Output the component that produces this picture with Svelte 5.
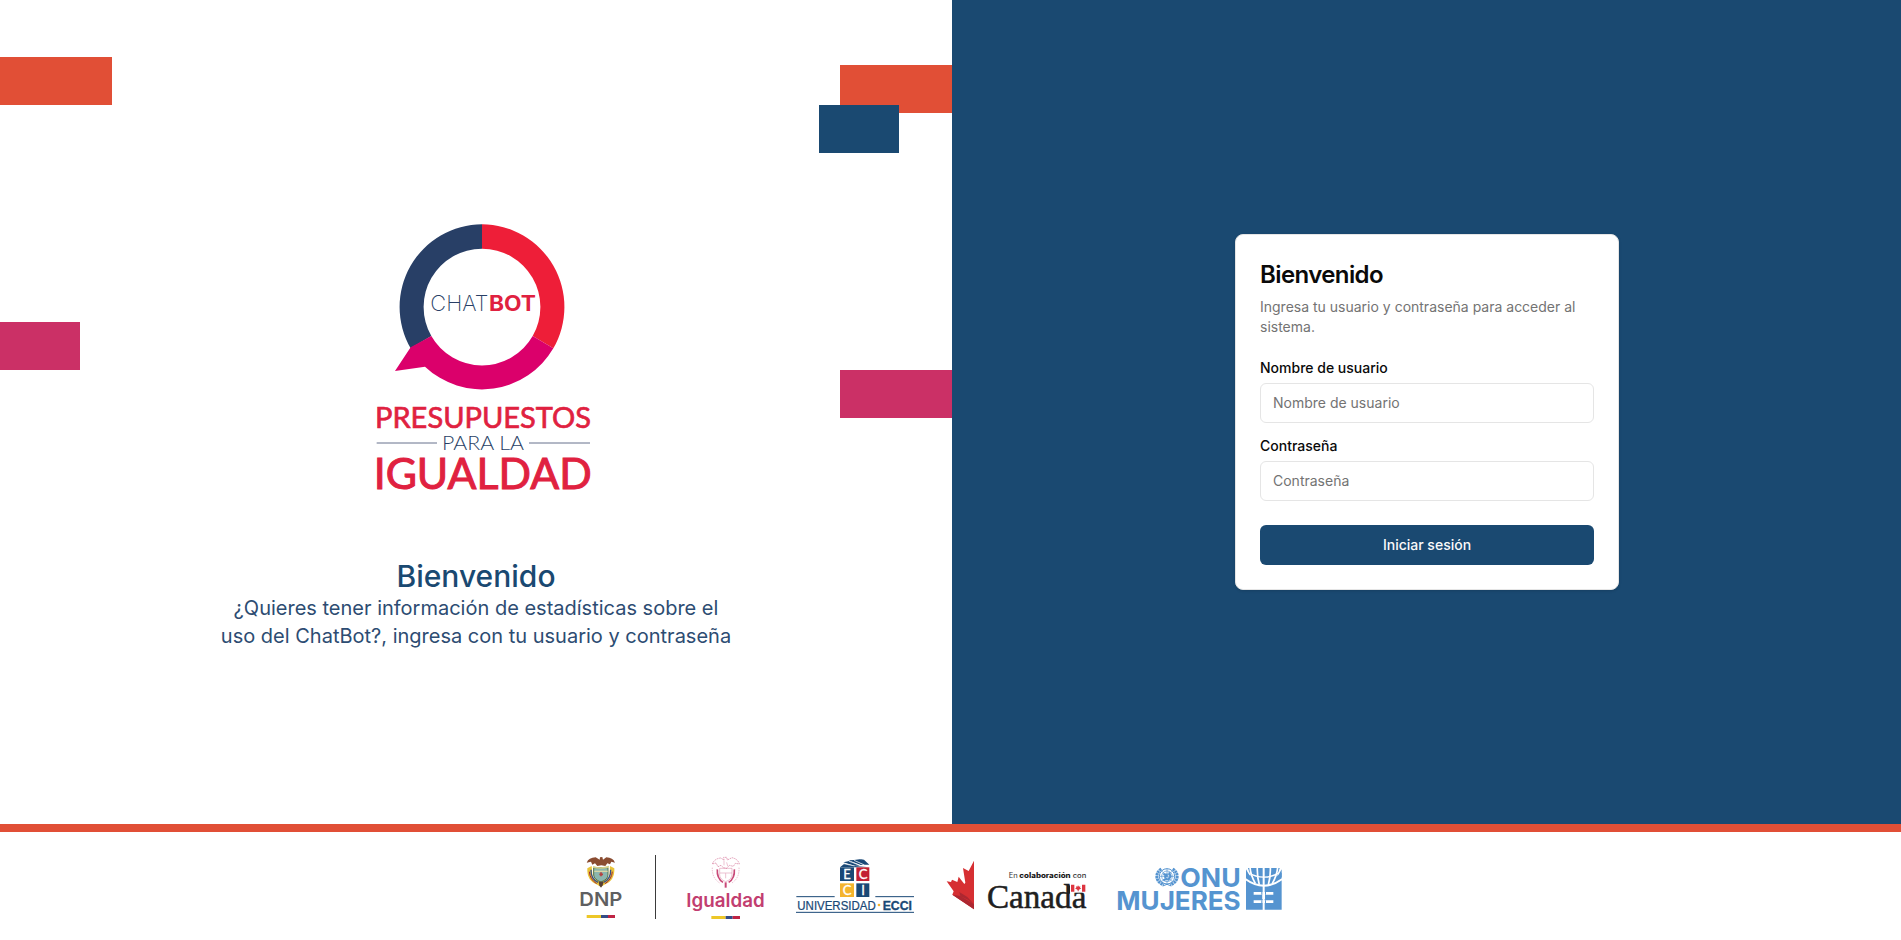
<script lang="ts">
  let user = $state('');
  let password = $state('');
</script>

<div class="page">
  <main>
    <section class="intro">
      <span class="block orange a"></span>
      <span class="block pink b"></span>
      <span class="block orange c"></span>
      <span class="block blue d"></span>
      <span class="block pink e"></span>

      <svg class="brand" viewBox="0 0 750 870" role="img" aria-label="Chatbot Presupuestos para la Igualdad">
        <path fill="#283f66" d="M366 43A248 248 0 0 0 152 415L214 378A175 175 0 0 1 366 116Z" />
        <path fill="#ee1e38" d="M366 43A248 248 0 0 1 580 415L518 378A175 175 0 0 0 366 116Z" />
        <path fill="#db006b" d="M580 415A248 248 0 0 1 195 470L105 483L152 412L214 378A175 175 0 0 0 518 378Z" />
        <text class="inter" x="211" y="304" font-size="63" font-weight="200" fill="#283f66" textLength="174" lengthAdjust="spacingAndGlyphs">CHAT</text>
        <text class="inter" x="387" y="304" font-size="63" font-weight="700" fill="#e02140" textLength="141" lengthAdjust="spacingAndGlyphs">BOT</text>
        <text class="lato heavy" x="45" y="655" font-size="87" textLength="648" lengthAdjust="spacingAndGlyphs">PRESUPUESTOS</text>
        <path stroke="#66708c" stroke-width="3" d="M50 699H231M507 699H690" />
        <text class="lato" x="246" y="719" font-size="60" font-weight="300" fill="#283f66" textLength="246" lengthAdjust="spacingAndGlyphs">PARA LA</text>
        <text class="lato heavy big" x="41" y="836" font-size="127" textLength="654" lengthAdjust="spacingAndGlyphs">IGUALDAD</text>
      </svg>

      <h1>Bienvenido</h1>
      <p>¿Quieres tener información de estadísticas sobre el uso del ChatBot?, ingresa con tu usuario y contraseña</p>
    </section>

    <section class="access">
      <form class="card" onsubmit={(e) => e.preventDefault()}>
        <header>
          <h2>Bienvenido</h2>
          <p>Ingresa tu usuario y contraseña para acceder al sistema.</p>
        </header>
        <div class="field">
          <label for="user">Nombre de usuario</label>
          <input id="user" placeholder="Nombre de usuario" bind:value={user} />
        </div>
        <div class="field">
          <label for="password">Contraseña</label>
          <input id="password" type="password" placeholder="Contraseña" bind:value={password} />
        </div>
        <button type="submit">Iniciar sesión</button>
      </form>
    </section>
  </main>

  <footer>
    <svg width="52" viewBox="45 51 156 324" role="img" aria-label="DNP">
      <path fill="#e9c338" d="M82 160Q80 198 112 209L122 216L133 209Q165 198 163 160L150 153L148 188L122 202L98 188L95 153Z" />
      <path fill="none" stroke="#35508b" stroke-width="4" d="M93 164Q92 191 114 202M152 164Q153 191 131 202" />
      <path fill="none" stroke="#a02c35" stroke-width="3" d="M88 170Q90 194 110 206M157 170Q155 194 135 206" />
      <path fill="#8bb6ae" stroke="#55713f" stroke-width="3" d="M101 158H144V180Q144 193 123 201Q101 193 101 180Z" />
      <path stroke="#d8d6a6" stroke-width="4" d="M103 169H143" />
      <path stroke="#b54240" stroke-width="5" d="M118 178H129M123 172V184" />
      <path fill="#8a4c31" d="M80 143Q86 128 107 127L119 134L120 127L127 126L129 134L139 127Q159 128 165 143L154 140L150 148L142 145L136 153L124 151L112 153L105 145L97 149L93 140Z" />
      <path fill="none" stroke="#d4cf8a" stroke-width="5" d="M99 155Q122 163 147 155" />
      <path fill="#553f37" d="M116 200H131L128 211L123 218L118 211Z" />
      <text class="inter" x="58" y="273" font-size="57" font-weight="600" fill="#5f5f61" textLength="129" lengthAdjust="spacingAndGlyphs">DNP</text>
      <path fill="#edc728" d="M80 300H123V309H80Z" /><path fill="#344c87" d="M123 300H144V309H123Z" /><path fill="#bf2444" d="M144 300H165V309H144Z" />
    </svg>

    <span class="divider"></span>

    <svg width="81" viewBox="375 51 243 324" role="img" aria-label="Igualdad">
      <g fill="none" stroke="#c94978">
        <path stroke-width="2" stroke-dasharray="5 2" opacity=".75" d="M457 147Q463 131 482 129L492 135L491 127L500 127L502 135L516 128Q534 132 538 147L526 145L520 154L508 151L500 160L490 158L483 151L474 155L468 144Z" />
        <path stroke-width="2" stroke-dasharray="4 3" opacity=".55" d="M457 158Q455 190 481 205M537 158Q539 190 514 205" />
        <path stroke-width="5" d="M472 163Q470 190 489 202M523 163Q525 190 506 202" />
        <path stroke-width="2" opacity=".5" d="M479 160H516V179Q516 193 497 200Q479 193 479 179ZM480 174H516M492 136V151M500 142L503 153M497 175V190" />
        <path stroke-width="6" d="M497 202V218" />
      </g>
      <text class="inter" x="379" y="276" font-size="56" font-weight="600" fill="#c23e70" textLength="235" lengthAdjust="spacingAndGlyphs">Igualdad</text>
      <path fill="#edc728" d="M454 303H497V312H454Z" /><path fill="#344c87" d="M497 303H518V312H497Z" /><path fill="#bf2444" d="M518 303H540V312H518Z" />
    </svg>

    <svg width="123" viewBox="42 51 369 324" role="img" aria-label="Universidad ECCI">
      <path fill="#194876" d="M180 157L193 146L224 153L268 157ZM190 142L208 138L240 152L224 152ZM206 136L222 135L252 150L242 150ZM222 135L239 133L265 149L253 149ZM239 132L252 134L268 149L262 149Z" />
      <path fill="none" stroke="#fff" stroke-width="2" d="M191 146L224 153M207 139L240 151M222 136L253 150" />
      <path fill="#194876" d="M180 157H222V198H180Z" /><path fill="#c22032" d="M229 157H268V198H229Z" />
      <path fill="#f4b42d" d="M180 205H222V246H180Z" /><path fill="#194876" d="M229 205H268V246H229Z" />
      <g class="lato" fill="#fff" font-size="39" font-weight="400" stroke="#fff" text-anchor="middle">
        <text x="201" y="192">E</text><text x="249" y="192">C</text>
        <text x="201" y="240">C</text><text x="249" y="240">I</text>
      </g>
      <path stroke="#194876" stroke-width="3" d="M49 245H164M286 245H402M48 292H402" />
      <text class="liberation" x="52" y="284" font-size="37" fill="#194876" stroke="#194876" stroke-width=".7" textLength="235" lengthAdjust="spacingAndGlyphs">UNIVERSIDAD</text>
      <circle cx="297" cy="270" r="4" fill="#f4b42d" />
      <text class="liberation" x="308" y="284" font-size="37" font-weight="700" fill="#194876" stroke="#194876" textLength="88" lengthAdjust="spacingAndGlyphs">ECCI</text>
    </svg>

    <svg width="143" viewBox="45 51 429 324" role="img" aria-label="En colaboración con Canadá">
      <path fill="#d62f32" d="M132 137V283L67 239L71 229L50 199L63 201L66 194L82 201L86 185L103 207L106 203L99 159L116 168Z" />
      <path fill="#ac2730" d="M67 239L91 243L132 268V283ZM88 231L112 246L132 268Q113 252 91 243Z" />
      <text class="inter" x="236" y="188" font-size="21" fill="#333" textLength="27" lengthAdjust="spacingAndGlyphs">En</text>
      <text class="inter" x="268" y="188" font-size="21" font-weight="800" fill="#171717" textLength="154" lengthAdjust="spacingAndGlyphs">colaboración</text>
      <text class="inter" x="428" y="188" font-size="21" font-weight="500" fill="#333" textLength="41" lengthAdjust="spacingAndGlyphs">con</text>
      <text class="serif" x="171" y="278" font-size="100" fill="#202020" stroke="#202020" stroke-width="1.5" textLength="298" lengthAdjust="spacingAndGlyphs">Canada</text>
      <path fill="#fff" d="M420 207H469V233H420Z" />
      <path fill="#dd3540" d="M423 209H433V230H423ZM456 209H466V230H456ZM444 211L447 215L451 214L450 218L454 220L446 225V229H443V225L435 220L439 218L438 214L442 215Z" />
      <path fill="#202020" d="M412 211H420V236H412Z" />
    </svg>

    <svg width="168" viewBox="48 51 504 324" role="img" aria-label="ONU Mujeres">
      <g fill="none" stroke="#5594d0">
        <circle cx="201" cy="184" r="23" stroke-width="3" />
        <circle cx="201" cy="184" r="16" stroke-width="2" /><circle cx="201" cy="184" r="8" stroke-width="2" />
        <path stroke-width="2" d="M178 184H224M201 161V207M185 168L217 200M217 168L185 200" />
        <path stroke-width="6" d="M190 177L200 180L194 188M207 172L212 184L204 196M190 196L202 191" />
        <path stroke-width="9" stroke-dasharray="7 1.5" d="M184 162C164 174 166 202 192 209M218 162C238 174 236 202 210 209" />
        <path stroke-width="3" d="M188 213L201 208L214 213" />
      </g>
      <text class="inter" x="241" y="216" font-size="79" font-weight="700" fill="#5594d0" textLength="181" lengthAdjust="spacingAndGlyphs">ONU</text>
      <text class="inter" x="49" y="284" font-size="79" font-weight="700" fill="#5594d0" textLength="373" lengthAdjust="spacingAndGlyphs">MUJERES</text>
      <path fill="#5594d0" d="M438 159H545V284H438Z" />
      <g fill="none" stroke="#fff">
        <path stroke-width="6" d="M436 192Q491 232 547 192" />
        <path stroke-width="4" d="M444 173Q491 200 539 173" />
        <path stroke-width="5" d="M450 157Q452 181 466 205M533 157Q531 181 517 205M472 157Q471 186 478 209M511 157Q512 186 505 209" />
        <path stroke-width="6" d="M491 157V286" />
        <path stroke-width="8" d="M491 235V252M461 235H520M461 260H520" />
      </g>
      <path fill="#fff" d="M436 157H443L452 183L436 172ZM547 157H540L531 183L547 172Z" />
      <path fill="#5594d0" d="M438 163L448 181L438 187ZM545 163L535 181L545 187ZM484 231H487V239H484ZM495 231H498V239H495ZM484 256H487V264H484ZM495 256H498V264H495Z" />
    </svg>
  </footer>
</div>

<style>
  :global(body) { margin: 0; }
  * { box-sizing: border-box; }
  .page { display: flex; flex-direction: column; height: 940px; overflow: hidden; background: #fff; font-family: Inter, sans-serif; }
  main { display: grid; grid-template-columns: 952px 1fr; height: 824px; }
  h1, h2, p { margin: 0; }
  .intro { position: relative; display: flex; flex-direction: column; align-items: center; padding-top: 210px; color: #1a4971; }
  .block { position: absolute; width: 112px; height: 48px; }
  .orange { background: #e14f36; }
  .pink { background: #cb3066; }
  .blue { background: #1a4971; width: 80px; }
  .a { left: 0; top: 57px; }
  .b { left: 0; top: 322px; width: 80px; }
  .c { right: 0; top: 65px; }
  .d { left: 819px; top: 105px; }
  .e { right: 0; top: 370px; }
  .brand { width: 250px; height: 290px; margin-left: 18px; }
  .intro h1 { margin-top: 58px; font-size: 30px; line-height: 36px; font-weight: 500; }
  .intro p { width: 512px; text-align: center; font-size: 20px; line-height: 28px; color: #2d4c72; }
  .access { display: flex; align-items: center; justify-content: center; padding-left: 1px; background: #1a4971; }
  .card { width: 384px; height: 356px; padding: 24px; border: 1px solid #e5e5e5; border-radius: 8px; background: #fff; box-shadow: 0 1px 3px #0002; }
  header { display: flex; flex-direction: column; gap: 6px; margin-bottom: 24px; }
  h2 { font-size: 24px; line-height: 32px; font-weight: 600; letter-spacing: -.6px; color: #0a0a0a; }
  header p { font-size: 14px; line-height: 20px; color: #737373; }
  .field { display: flex; flex-direction: column; gap: 8px; margin-bottom: 16px; }
  label { font-size: 14px; line-height: 14px; font-weight: 500; color: #0a0a0a; }
  input { width: 100%; height: 40px; padding: 7px 12px 9px; border: 1px solid #e5e5e5; border-radius: 6px; background: #fff; font: 14px/20px Inter, sans-serif; outline: none; }
  input::placeholder { color: #737373; }
  button { width: 100%; height: 40px; margin-top: 8px; border: 0; border-radius: 6px; background: #1a4971; color: #fafafa; font: 500 14px/20px Inter, sans-serif; }
  footer { display: flex; gap: 28px; height: 116px; padding-left: 575px; border-top: 8px solid #e14f36; }
  footer svg { height: 108px; flex: none; }
  .divider { width: 1px; height: 64px; margin: 23px 1px 0 0; background: #3b3b3b; flex: none; }
  .inter { font-family: Inter, sans-serif; }
  .lato { font-family: Lato, sans-serif; }
  .heavy { font-weight: 400; fill: #e02140; stroke: #e02140; stroke-width: 2px; }
  .big { stroke-width: 3px; }
  .liberation { font-family: "Liberation Sans", sans-serif; }
  .serif { font-family: "Liberation Serif", serif; }
</style>
